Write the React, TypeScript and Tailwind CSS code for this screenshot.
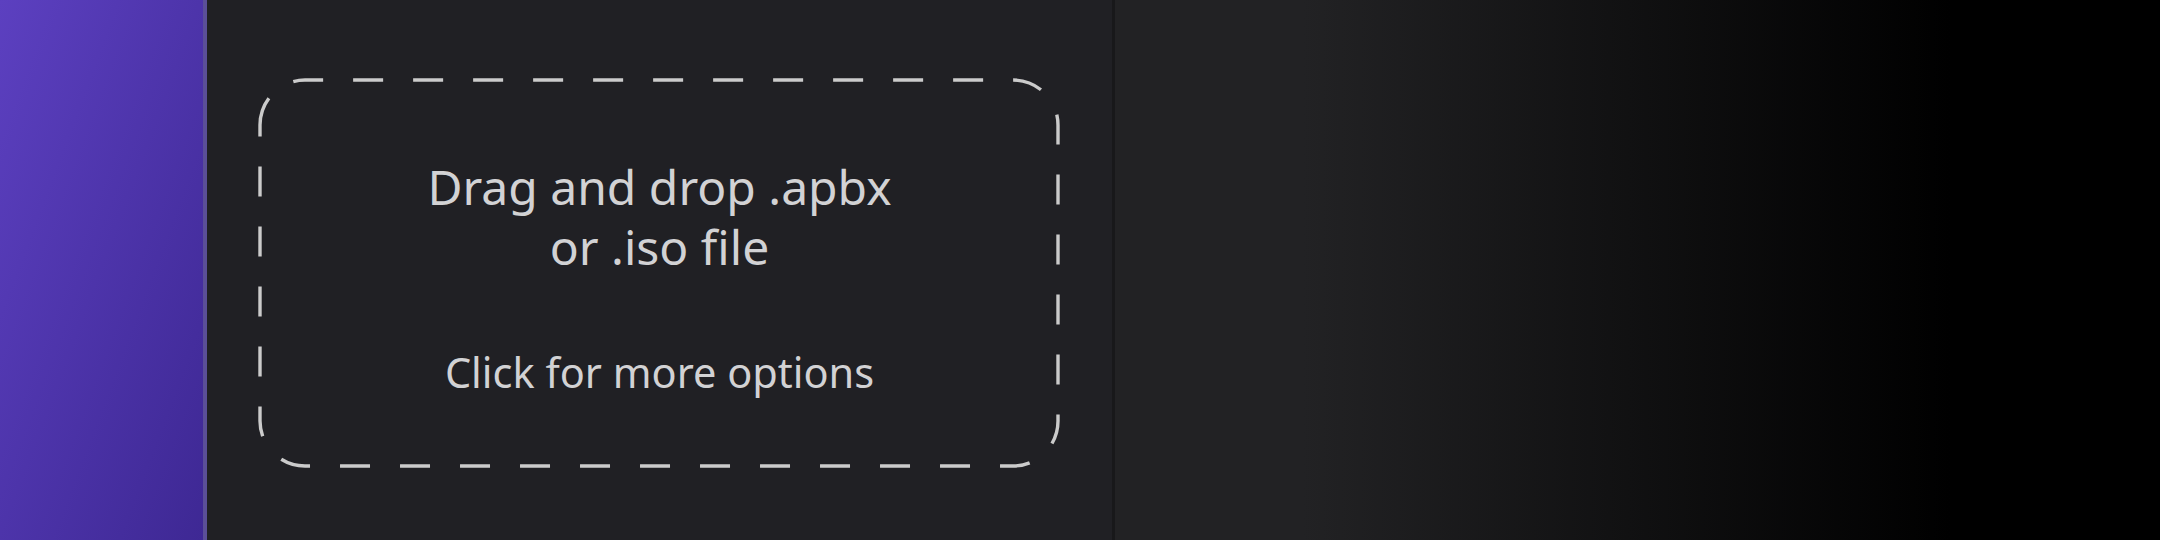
import React from 'react';

const FONT = "font-['Noto_Sans','Open_Sans',sans-serif]";

function DropZone() {
  return (
    <div className="relative mt-[78px] ml-[51px] w-[803px] h-[390px] cursor-pointer">
      {/* Dashed frame */}
      <svg
        className="absolute inset-0"
        width="803"
        height="390"
        viewBox="0 0 803 390"
        fill="none"
      >
        <path
          d="M 2 47 A 45 45 0 0 1 47 2 L 755 2 A 45 45 0 0 1 800 47 L 800 343 A 45 45 0 0 1 755 388 L 47 388 A 45 45 0 0 1 2 343 Z"
          stroke="#cbcbcb"
          strokeWidth="3.4"
          strokeDasharray="30 30"
          strokeDashoffset="1.3"
        />
      </svg>
      <div className={`relative flex flex-col items-center pt-[79px] text-[#d2d2d4] ${FONT}`}>
        <p className="text-[48px] leading-[60px] text-center">
          Drag and drop .apbx
          <br />
          or .iso file
        </p>
        <p className="mt-[67px] text-[41.5px] leading-[56px]">Click for more options</p>
      </div>
    </div>
  );
}

export default function App() {
  return (
    <div className="flex w-[2160px] h-[540px] overflow-hidden bg-black">
      {/* Sidebar */}
      <div className="w-[207px] shrink-0 border-r-4 border-[#5b4f98] bg-linear-to-br from-[#5c40c0] to-[#3e2894]" />

      {/* Main panel */}
      <div className="w-[908px] shrink-0 border-r-[3px] border-[#18181a] bg-[#202024]">
        <DropZone />
      </div>

      {/* Preview area */}
      <div className="flex-1 bg-linear-to-r/srgb from-[#222224] from-18% to-black to-80%" />
    </div>
  );
}
